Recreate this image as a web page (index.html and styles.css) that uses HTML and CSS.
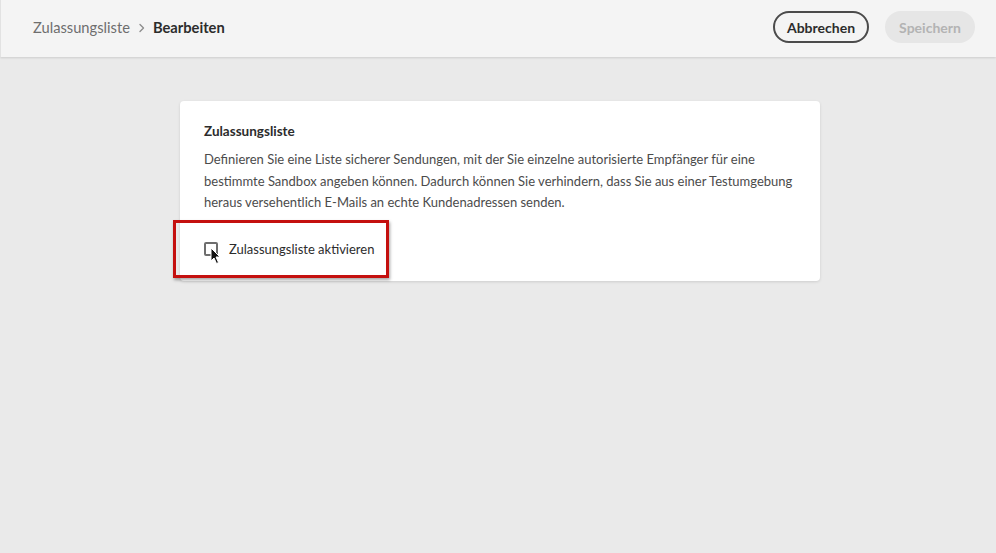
FILE: index.html
```html
<!DOCTYPE html>
<html lang="de">
<head>
<meta charset="utf-8">
<link rel="stylesheet" href="styles.css">
</head>
<body>
<header class="topbar">
  <nav class="crumbs">
    <span class="crumb">Zulassungsliste</span>
    <svg class="chev" width="8" height="10" viewBox="0 0 8 10"><path d="M2 1.5 L5.5 5 L2 8.5" fill="none" stroke="#8e8e8e" stroke-width="1.4" stroke-linecap="round" stroke-linejoin="round"/></svg>
    <span class="crumb current">Bearbeiten</span>
  </nav>
  <div class="actions">
    <button class="btn outline">Abbrechen</button>
    <button class="btn disabled">Speichern</button>
  </div>
</header>
<main class="content">
  <section class="card">
    <h2 class="card-title">Zulassungsliste</h2>
    <p class="card-text">Definieren Sie eine Liste sicherer Sendungen, mit der Sie einzelne autorisierte Empfänger für eine bestimmte Sandbox angeben können. Dadurch können Sie verhindern, dass Sie aus einer Testumgebung heraus versehentlich E-Mails an echte Kundenadressen senden.</p>
    <div class="highlight">
      <label class="check">
        <span class="box"></span>
        <span class="label">Zulassungsliste aktivieren</span>
      </label>
      <svg class="cursor" width="12" height="18" viewBox="0 0 12 18"><path d="M1 1 L1 14 L4 11 L6.5 16.5 L8.5 15.5 L6 10 L10 10 Z" fill="#111" stroke="#fff" stroke-width="1" stroke-linejoin="round"/></svg>
    </div>
  </section>
</main>
</body>
</html>
```
FILE: styles.css
```css
* { box-sizing: border-box; }
html, body { margin: 0; padding: 0; }
body {
  width: 996px;
  height: 553px;
  background: #eaeaea;
  font-family: Lato, "Open Sans", sans-serif;
  color: #4b4b4b;
  overflow: hidden;
}
.topbar {
  height: 57px;
  background: #f4f4f4;
  display: flex;
  align-items: center;
  justify-content: space-between;
  padding: 0 21px 0 32px;
  box-shadow: 0 1px 2px rgba(0,0,0,0.12);
  border-left: 1px solid #e2e2e2;
}
.crumbs { display: flex; align-items: center; margin-top: -4px; }
.crumb { font-size: 14.7px; color: #6e6e6e; }
.chev { margin: 2px 7px 0 8px; }
.crumb.current { font-weight: 700; color: #2c2c2c; }
.actions { display: flex; gap: 16px; margin-top: -3px; }
.btn {
  height: 32px;
  border-radius: 16px;
  font-family: inherit;
  font-size: 14px;
  font-weight: 700;
  padding: 0 10px;
}
.btn.outline {
  border: 2px solid #4b4b4b;
  background: transparent;
  color: #2c2c2c;
  width: 96px;
}
.btn.disabled {
  border: none;
  background: #e6e6e6;
  color: #b3b3b3;
  width: 90px;
}
.content {
  padding-top: 44px;
  display: flex;
  justify-content: center;
}
.card {
  width: 640px;
  height: 180px;
  background: #fff;
  border-radius: 4px;
  box-shadow: 0 1px 3px rgba(0,0,0,0.12);
  padding: 22px 24px 0 24px;
  margin-left: 4px;
}
.card-title {
  margin: 0;
  font-size: 13.5px;
  font-weight: 700;
  color: #2c2c2c;
  line-height: 17px;
}
.card-text {
  margin: 9px 0 0 0;
  font-size: 13px;
  line-height: 21.5px;
  color: #4b4b4b;
}
.highlight {
  position: relative;
  margin: 6px 0 0 -31px;
  width: 216px;
  height: 58px;
  border: 3px solid #c4100f;
  box-shadow: 1px 2px 3px rgba(0,0,0,0.35);
  display: flex;
  align-items: center;
  padding-left: 28px;
}
.check { display: flex; align-items: center; gap: 11px; }
.box {
  width: 14px;
  height: 14px;
  border: 2px solid #6e6e6e;
  border-radius: 2px;
  background: #fff;
}
.label { font-size: 13px; color: #2c2c2c; }
.cursor { position: absolute; left: 34px; top: 24px; }
```
